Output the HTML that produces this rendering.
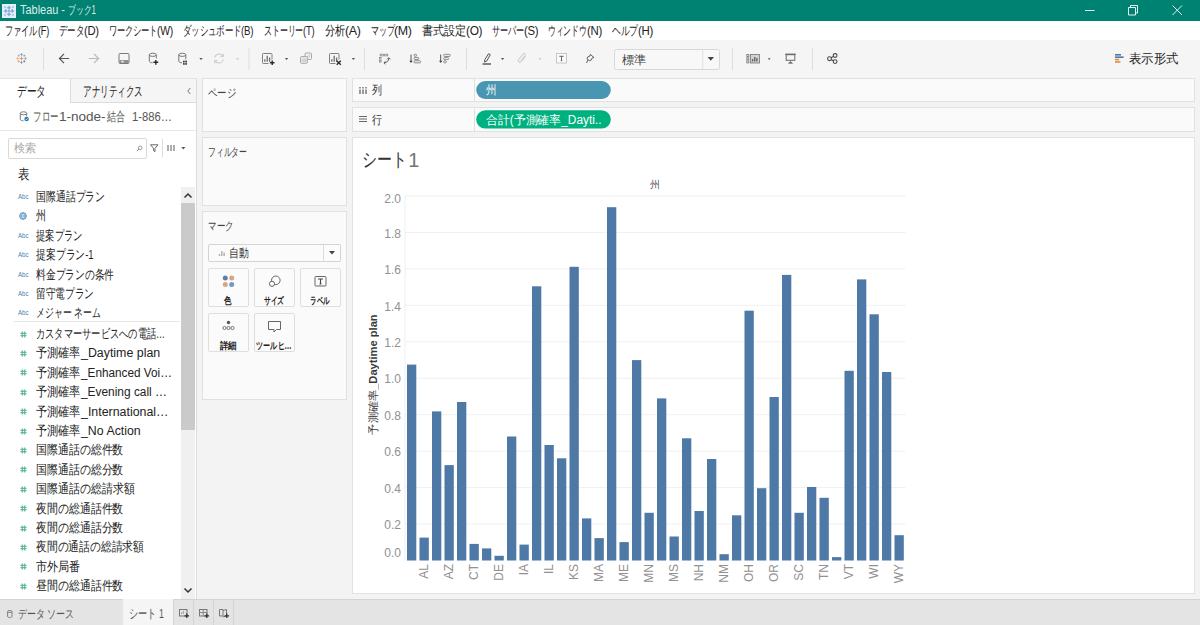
<!DOCTYPE html>
<html lang="ja">
<head>
<meta charset="utf-8">
<title>Tableau - ブック1</title>
<style>
html,body{margin:0;padding:0}
body{width:1200px;height:625px;overflow:hidden;position:relative;background:#f3f3f3;font-family:"Liberation Sans",sans-serif;font-size:12px;color:#333}
.abs{position:absolute}
.t{position:absolute;white-space:nowrap;font-family:"Liberation Sans",sans-serif}
svg{display:block;overflow:visible}
.titlebar{position:absolute;left:0;top:0;width:1200px;height:21px;background:#008272}
.menubar{position:absolute;left:0;top:21px;width:1200px;height:19px;background:#fff}
.menubar .t{top:2px;font-size:12px;line-height:16px;color:#222;letter-spacing:-0.3px}
.toolbar{position:absolute;left:0;top:40px;width:1200px;height:38px;background:#f5f5f5}
.sep{position:absolute;top:8px;width:1px;height:22px;background:#dedede}
.card{position:absolute;background:#fafafa;border:1px solid #e1e1e1;box-sizing:border-box}
.view{position:absolute;left:352px;top:137px;width:842.7px;height:456.5px;background:#fff;border:1px solid #e2e2e2;box-sizing:border-box}
.ax{font-size:12px;line-height:16px;color:#919191}
.ytitle{left:272.5px;top:367.2px;width:200px;height:14px;text-align:center;transform:rotate(-90deg);font-size:11px;font-weight:bold;color:#3a3a3a;line-height:14px}
.xl{top:557px;height:14px;line-height:14px;transform-origin:100% 50%;transform:rotate(-90deg);font-size:12px;color:#919191}
.pane{position:absolute;left:0;top:78px;width:197px;height:521px;background:#fff;border-right:1px solid #dcdcdc;box-sizing:border-box}
.fld{left:36px;font-size:12.500px;line-height:18px;color:#222}
.mb{position:absolute;width:41px;height:39.500px;box-sizing:border-box;border:1px solid #dedede;border-radius:2px;background:#fbfbfb}
.ml{width:101px;text-align:center;font-size:10px;line-height:13px;color:#222;font-weight:bold}
.pill{position:absolute;box-sizing:border-box;width:135px;height:18px;border-radius:9px;color:#fff;font-size:12px;line-height:18px;padding-left:10px;white-space:nowrap;overflow:hidden;font-family:"Liberation Sans",sans-serif}
.sg{position:absolute;top:0;white-space:nowrap;display:block}

</style>
</head>
<body>
<div class="titlebar">
<svg class="abs" style="left:2px;top:3.500px" width="14" height="14" viewBox="0 0 15 15">
<rect x="0" y="0" width="15" height="15" fill="#e6eff8"/>
<g fill="#6c9fd6" opacity=".85">
<rect x="6.8" y="2" width="1.4" height="4"/><rect x="5.5" y="3.3" width="4" height="1.4"/>
<rect x="6.8" y="9" width="1.4" height="4"/><rect x="5.5" y="10.3" width="4" height="1.4"/>
<rect x="2" y="6.8" width="4" height="1.4"/><rect x="3.3" y="5.5" width="1.4" height="4"/>
<rect x="9" y="6.8" width="4" height="1.4"/><rect x="10.3" y="5.5" width="1.4" height="4"/>
<rect x="6.3" y="6.8" width="2.4" height="1.4"/><rect x="6.8" y="6.3" width="1.4" height="2.4"/>
<rect x="2.5" y="2.5" width="1.5" height="1.5"/><rect x="11" y="2.5" width="1.5" height="1.5"/>
<rect x="2.5" y="11" width="1.5" height="1.5"/><rect x="11" y="11" width="1.5" height="1.5"/>
</g>
</svg>
<div class="t" style="left:0;top:2px;font-size:12px;line-height:17px;color:rgba(255,255,255,.88);"><span class="sg" style="transform-origin:0 50%;transform:scaleX(0.9114);width:49.40px;text-align-last:justify;left:20px">Tableau -</span><span class="sg" style="left:65px"> </span><span class="sg" style="transform-origin:0 50%;transform:scaleX(0.6559);width:42.71px;text-align-last:justify;left:68px">ブック1</span></div>
<svg class="abs" style="left:1080px;top:0" width="120" height="21" viewBox="1080 0 120 21">
<g stroke="#fff" stroke-opacity=".9" stroke-width="1" fill="none">
<path d="M1085 10.5H1094.5"/>
<path d="M1128.5 7.5h7v7.5h-7z"/><path d="M1130.5 7.5v-2h7v7.5h-2"/>
<path d="M1172.5 5.5l9.5 9.5M1182 5.5l-9.5 9.5"/>
</g>
</svg>
</div>

<div class="menubar">
<div class="t" style="left:0"><span class="sg" style="transform-origin:0 50%;transform:scaleX(0.6396);width:50.83px;text-align-last:justify;font-size:13px;left:5.0px">ファイル</span><span class="sg" style="transform-origin:0 50%;transform:scaleX(0.7619);width:14.46px;text-align-last:justify;left:37.5px">(F)</span></div>
<div class="t" style="left:0"><span class="sg" style="transform-origin:0 50%;transform:scaleX(0.6508);width:38.13px;text-align-last:justify;font-size:13px;left:59.0px">データ</span><span class="sg" style="transform-origin:0 50%;transform:scaleX(0.9388);width:15.79px;text-align-last:justify;left:83.8px">(D)</span></div>
<div class="t" style="left:0"><span class="sg" style="transform-origin:0 50%;transform:scaleX(0.6365);width:76.22px;text-align-last:justify;font-size:13px;left:108.5px">ワークシート</span><span class="sg" style="transform-origin:0 50%;transform:scaleX(0.8685);width:18.44px;text-align-last:justify;left:157.0px">(W)</span></div>
<div class="t" style="left:0"><span class="sg" style="transform-origin:0 50%;transform:scaleX(0.6546);width:88.93px;text-align-last:justify;font-size:13px;left:183.0px">ダッシュボード</span><span class="sg" style="transform-origin:0 50%;transform:scaleX(0.8074);width:15.13px;text-align-last:justify;left:241.2px">(B)</span></div>
<div class="t" style="left:0"><span class="sg" style="transform-origin:0 50%;transform:scaleX(0.6172);width:63.54px;text-align-last:justify;font-size:13px;left:263.5px">ストーリー</span><span class="sg" style="transform-origin:0 50%;transform:scaleX(0.7827);width:14.46px;text-align-last:justify;left:302.7px">(T)</span></div>
<div class="t" style="left:0"><span class="sg" style="transform-origin:0 50%;transform:scaleX(0.7872);width:25.43px;text-align-last:justify;font-size:13px;left:325.0px">分析</span><span class="sg" style="transform-origin:0 50%;transform:scaleX(1.0391);width:15.13px;text-align-last:justify;left:345.0px">(A)</span></div>
<div class="t" style="left:0"><span class="sg" style="transform-origin:0 50%;transform:scaleX(0.6193);width:38.13px;text-align-last:justify;font-size:13px;left:370.7px">マップ</span><span class="sg" style="transform-origin:0 50%;transform:scaleX(1.0355);width:17.11px;text-align-last:justify;left:394.3px">(M)</span></div>
<div class="t" style="left:0"><span class="sg" style="transform-origin:0 50%;transform:scaleX(0.8541);width:50.83px;text-align-last:justify;font-size:13px;left:422.3px">書式設定</span><span class="sg" style="transform-origin:0 50%;transform:scaleX(0.9916);width:16.46px;text-align-last:justify;left:465.7px">(O)</span></div>
<div class="t" style="left:0"><span class="sg" style="transform-origin:0 50%;transform:scaleX(0.6239);width:50.83px;text-align-last:justify;font-size:13px;left:492.3px">サーバー</span><span class="sg" style="transform-origin:0 50%;transform:scaleX(0.9464);width:15.13px;text-align-last:justify;left:524.0px">(S)</span></div>
<div class="t" style="left:0"><span class="sg" style="transform-origin:0 50%;transform:scaleX(0.6046);width:63.54px;text-align-last:justify;font-size:13px;left:548.3px">ウィンドウ</span><span class="sg" style="transform-origin:0 50%;transform:scaleX(0.9514);width:15.79px;text-align-last:justify;left:586.7px">(N)</span></div>
<div class="t" style="left:0"><span class="sg" style="transform-origin:0 50%;transform:scaleX(0.6822);width:38.13px;text-align-last:justify;font-size:13px;left:612.3px">ヘルプ</span><span class="sg" style="transform-origin:0 50%;transform:scaleX(0.9514);width:15.79px;text-align-last:justify;left:638.3px">(H)</span></div>
</div>
<div class="toolbar">
<svg class="abs" style="left:0;top:0" width="1200" height="38" viewBox="0 40 1200 38">
<!-- separators -->
<g fill="#dddddd">
<rect x="43" y="48" width="1" height="22"/><rect x="248.5" y="48" width="1" height="22"/><rect x="364" y="48" width="1" height="22"/>
<rect x="466" y="48" width="1" height="22"/><rect x="732" y="48" width="1" height="22"/><rect x="812" y="48" width="1" height="22"/>
</g>
<!-- tableau logo -->
<g stroke-width="1" fill="none">
<path d="M21.500 56.500v4M19.500 58.500h4" stroke="#ec9a5c"/>
<path d="M21.500 53.300v2.400M20.300 54.500h2.400" stroke="#8d93b3"/>
<path d="M21.500 61.300v2.400M20.300 62.500h2.400" stroke="#8d93b3"/>
<path d="M17.500 57.300v2.400M16.300 58.500h2.400" stroke="#f0b27a"/>
<path d="M25.500 57.300v2.400M24.300 58.500h2.400" stroke="#8aa9b8"/>
<path d="M18.700 54.700v2M17.700 55.700h2" stroke="#9bb6c1"/>
<path d="M24.300 54.700v2M23.300 55.700h2" stroke="#84a3c6"/>
<path d="M18.700 60.300v2M17.700 61.300h2" stroke="#d99a7a"/>
<path d="M24.300 60.300v2M23.300 61.300h2" stroke="#6c84a8"/>
</g>
<!-- back / forward -->
<path d="M64 53.900L59.400 58.500L64 63.100M59.800 58.500H69.200" stroke="#555" stroke-width="1.200" fill="none"/>
<path d="M94 53.900L98.600 58.500L94 63.100M98.200 58.500H88.800" stroke="#b8b8b8" stroke-width="1.200" fill="none"/>
<!-- save -->
<g stroke="#7a7a7a" stroke-width="1" fill="none">
<rect x="119" y="53.500" width="10" height="10" rx="1"/>
<rect x="119.500" y="60" width="9" height="3" fill="#909090" stroke="none"/>
<rect x="121.300" y="60.800" width="2.400" height="1.600" fill="#f5f5f5" stroke="none"/>
</g>
<!-- new data source -->
<g stroke="#777" stroke-width="1" fill="none">
<ellipse cx="152.800" cy="54.800" rx="3.500" ry="1.600"/>
<path d="M149.300 54.800v6.400c0 .9 1.500 1.600 3.300 1.600M156.300 54.800v3.700"/>
<path d="M155.800 59.900v4.800M153.400 62.300h4.800" stroke="#2b2b2b" stroke-width="1.400"/>
</g>
<!-- pause auto updates -->
<g stroke="#777" stroke-width="1" fill="none">
<ellipse cx="182.300" cy="54.800" rx="3.500" ry="1.600"/>
<path d="M178.800 54.800v6.400c0 .9 1.500 1.600 3.300 1.600M185.800 54.800v4.500"/>
<rect x="183" y="60.700" width="4" height="4" fill="#3a3a3a" stroke="none"/>
<path d="M185 60.700v4M183 62.700h4" stroke="#f5f5f5" stroke-width="0.600"/>
</g>
<path d="M199.300 58.100h3.400l-1.700 2z" fill="#555"/>
<!-- refresh (disabled) -->
<g stroke="#cbcbcb" stroke-width="1.100" fill="none">
<path d="M214.800 57.500a4.400 4.400 0 0 1 8-1.500"/><path d="M223.200 59.500a4.400 4.400 0 0 1 -8 1.500"/>
<path d="M223.300 53.800v2.600h-2.600" /><path d="M214.700 63.200v-2.600h2.600"/>
</g>
<path d="M236.2 58.200h2.800l-1.400 1.700z" fill="#c2c2c2"/>
<!-- new worksheet -->
<g stroke="#808080" stroke-width="1" fill="none">
<path d="M272 59.500V54.300a.8 .8 0 0 0 -.8 -.8H263.300a.8 .8 0 0 0 -.8 .8V62.700a.8 .8 0 0 0 .8 .8H268.500"/>
<path d="M264.800 61.700v-2.400M267.200 61.700v-6M269.600 61.700v-4.200" stroke="#6e6e6e" stroke-width="1.300"/>
<path d="M272.200 60.500v4.600M269.900 62.800h4.600" stroke="#2b2b2b" stroke-width="1.400"/>
</g>
<path d="M284.900 58.100h3.400l-1.700 2z" fill="#555"/>
<!-- duplicate (disabled) -->
<g stroke="#ababab" stroke-width="1" fill="#f1f1f1">
<rect x="305" y="53" width="6.500" height="6.500" rx="1"/>
<path d="M307.300 57.500v-1.500M309.200 57.500v-3" stroke="#bdbdbd"/>
<rect x="300.500" y="56.500" width="6.800" height="6.800" rx="1" fill="#e6e6e6"/>
<path d="M302.500 61.500v-1.500M304 61.500v-3M305.500 61.500v-2" stroke="#bdbdbd" stroke-width=".9"/>
</g>
<!-- clear sheet -->
<g stroke="#808080" stroke-width="1" fill="none">
<path d="M339 59.500V54.300a.8 .8 0 0 0 -.8 -.8H330.300a.8 .8 0 0 0 -.8 .8V62.700a.8 .8 0 0 0 .8 .8H335.500"/>
<path d="M331.800 61.700v-2.400M334.200 61.700v-6M336.600 61.700v-4.200" stroke="#6e6e6e" stroke-width="1.300"/>
<path d="M336.700 60.700l4.100 4.100M340.800 60.700l-4.100 4.100" stroke="#2b2b2b" stroke-width="1.400"/>
</g>
<path d="M351.700 58.100h3.400l-1.700 2z" fill="#555"/>
<!-- swap -->
<g stroke="#8a8a8a" stroke-width=".8" fill="none">
<rect x="380.200" y="54.200" width="1.700" height="1.700"/><rect x="383.100" y="54.200" width="1.700" height="1.700"/><rect x="386" y="54.200" width="1.700" height="1.700"/>
<rect x="379.400" y="57.400" width="1.700" height="1.700"/><rect x="379.400" y="60.400" width="1.700" height="1.700"/>
<path d="M388.800 58.200c0 2.800 -1.900 4.400 -4.600 4.600" stroke="#5e5e5e" stroke-width="1"/>
<path d="M387.200 59.300l1.600 -1.600l1.600 1.600" stroke="#5e5e5e" stroke-width="1"/>
<path d="M385.500 61.400l-1.600 1.400l1.600 1.400" stroke="#5e5e5e" stroke-width="1"/>
</g>
<!-- sort asc -->
<g stroke="#858585" stroke-width=".9" fill="#ececec">
<path d="M411 54.500v7" stroke="#555" stroke-width="1" fill="none"/>
<path d="M409.300 60.700h3.400l-1.700 2.300z" fill="#444" stroke="none"/>
<rect x="414" y="54.300" width="2.600" height="2" rx=".8"/>
<rect x="414" y="57.500" width="4.800" height="2" rx=".8"/>
<rect x="414" y="60.700" width="6.600" height="2.200" rx=".9"/>
</g>
<!-- sort desc -->
<g stroke="#858585" stroke-width=".9" fill="#ececec">
<path d="M440.700 54.500v7" stroke="#555" stroke-width="1" fill="none"/>
<path d="M439 60.700h3.400l-1.700 2.300z" fill="#444" stroke="none"/>
<rect x="443.700" y="54.300" width="6.600" height="2.200" rx=".9"/>
<rect x="443.700" y="57.600" width="4.800" height="2" rx=".8"/>
<rect x="443.700" y="60.800" width="2.600" height="2" rx=".8"/>
</g>
<!-- highlight pen -->
<g stroke="#555" stroke-width="1" fill="none">
<path d="M488.500 53.700l1.800 .9l-3.600 6.600l-2.300 .8l.5 -2.400z"/>
<path d="M482.500 64h8.500" stroke="#444" stroke-width="1.300"/>
</g>
<path d="M500.9 58.100h3.400l-1.700 2z" fill="#555"/>
<!-- paperclip (disabled) -->
<g stroke="#c6c6c6" stroke-width="1" fill="none">
<path d="M525.500 56.500l-4.200 5.300a1.700 1.700 0 0 1 -2.700 -2.100l4.600 -5.800a1.200 1.200 0 0 1 1.900 1.500l-4.200 5.300"/>
</g>
<path d="M538.6 58.200h2.800l-1.400 1.700z" fill="#c2c2c2"/>
<!-- T box -->
<rect x="556.500" y="53.500" width="10" height="9.500" fill="#fbfbfb" stroke="#c6c6c6" stroke-width="1"/>
<path d="M559.300 56.300h4.400M561.500 56.300v4.400M560.700 60.700h1.600" stroke="#666" stroke-width="1" fill="none"/>
<!-- pin -->
<g stroke="#5a5a5a" stroke-width="1" fill="none" stroke-linejoin="round">
<path d="M590.300 54.300l3.700 3.300l-1.700 .3l-1.400 2.400l-1.600 .4l-2.300 -2l.5 -1.600l2.500 -1.200z"/>
<path d="M588 59.700l-1.500 3.300"/>
</g>
<!-- fit select -->
<rect x="614.500" y="49.500" width="105" height="20" rx="2" fill="#f8f8f8" stroke="#d8d8d8"/>
<path d="M702.800 50v19" stroke="#e0e0e0"/>
<path d="M707.600 57h6.400l-3.200 3.800z" fill="#444"/>
<!-- show/hide cards -->
<g stroke="#808080" stroke-width=".9" fill="none">
<rect x="750.500" y="54.500" width="9" height="8.500" fill="#d2d2d2"/>
<path d="M752.600 61.500v-2.500M754.700 61.500v-4.500M756.900 61.500v-3.500" stroke="#666" stroke-width="1.400"/>
<rect x="746.800" y="54.500" width="2" height="2"/><rect x="746.800" y="57.700" width="2" height="2"/><rect x="746.800" y="60.900" width="2" height="2"/>
</g>
<path d="M767.8 58.200h2.800l-1.400 1.700z" fill="#555"/>
<!-- presentation -->
<g stroke="#686868" stroke-width="1" fill="none">
<path d="M785.200 54.200h10.600" stroke="#555" stroke-width="1.100"/>
<rect x="786.200" y="54.700" width="8.600" height="5.600"/>
<path d="M790.500 60.300v1.600M788.500 63.300l2 -1.600l2 1.600z" fill="#777" stroke-width=".7"/>
</g>
<!-- share -->
<g stroke="#4a4a4a" stroke-width="1.100" fill="#f5f5f5">
<path d="M829.500 58.700l5.500 -3.200M829.500 58.700l5.500 2.900" fill="none"/>
<circle cx="829.500" cy="58.700" r="1.900"/><circle cx="835.100" cy="55.500" r="1.900"/><circle cx="835.100" cy="61.600" r="1.900"/>
</g>
<!-- show me -->
<g>
<rect x="1115" y="54" width="6" height="1.600" fill="#4e79a7"/>
<rect x="1115" y="56.400" width="8.600" height="1.600" fill="#4e79a7"/>
<rect x="1115" y="58.800" width="4.200" height="1.600" fill="#e08a4f"/>
<rect x="1115" y="61.200" width="5.400" height="1.600" fill="#e08a4f"/>
</g>
</svg>
<div class="t" style="transform-origin:0 50%;transform:scaleX(1.0167);width:24.02px;text-align-last:justify;left:621.5px;top:11px;font-size:12px;line-height:18px;color:#444">標準</div>
<div class="t" style="transform-origin:0 50%;transform:scaleX(0.9481);width:52.02px;text-align-last:justify;left:1128.5px;top:10px;font-size:12.500px;line-height:18px;color:#222">表示形式</div>
</div>

<div class="pane"></div>
<div class="abs" style="left:70px;top:78px;width:126px;height:24.500px;background:#f5f5f5;border-left:1px solid #dcdcdc;border-bottom:1px solid #dcdcdc;box-sizing:border-box"></div>
<div class="abs" style="left:0;top:78px;width:197px;height:1px;background:#e4e4e4"></div>
<div class="t" style="transform-origin:0 50%;transform:scaleX(0.6905);width:42.02px;text-align-last:justify;left:16.700px;top:82px;font-size:14px;line-height:18px;color:#222">データ</div>
<div class="t" style="transform-origin:0 50%;transform:scaleX(0.6122);width:98.02px;text-align-last:justify;left:82.500px;top:82px;font-size:14px;line-height:18px;color:#222">アナリティクス</div>
<svg class="abs" style="left:185px;top:85.500px" width="8" height="10" viewBox="0 0 8 10"><path d="M5.300 2L2.800 5l2.500 3" stroke="#777" stroke-width="1" fill="none"/></svg>
<svg class="abs" style="left:19px;top:111px" width="11" height="11" viewBox="0 0 11 11"><g stroke="#777" fill="none" stroke-width="1"><ellipse cx="4.500" cy="2.300" rx="3.200" ry="1.500"/><path d="M1.300 2.300v6c0 .9 1.400 1.500 3.200 1.500M7.700 2.300v3"/></g><circle cx="7.600" cy="8" r="2.300" fill="#2a7fb5"/><path d="M6.600 8l.8 .8l1.300 -1.500" stroke="#fff" stroke-width=".7" fill="none"/></svg>
<div class="t" style="left:0;top:108px;font-size:13px;line-height:18px;color:#555"><span class="sg" style="transform-origin:0 50%;transform:scaleX(0.6538);width:39.02px;text-align-last:justify;left:33.300px">フロー</span><span class="sg" style="transform-origin:0 50%;transform:scaleX(1.0399);width:44.83px;text-align-last:justify;left:59.200px">1-node-</span><span class="sg" style="transform-origin:0 50%;transform:scaleX(0.6923);width:26.02px;text-align-last:justify;left:106.500px">結合</span><span class="sg" style="left:125.500px"> </span><span class="sg" style="transform-origin:0 50%;transform:scaleX(0.8649);width:46.27px;text-align-last:justify;left:131.700px">1-886…</span></div>
<div class="abs" style="left:0;top:129.500px;width:196px;height:1px;background:#e8e8e8"></div>
<div class="abs" style="left:7.500px;top:137.500px;width:139px;height:21px;box-sizing:border-box;border:1px solid #d9d9d9;border-radius:2px;background:#fff"></div>
<div class="t" style="transform-origin:0 50%;transform:scaleX(0.9167);width:24.02px;text-align-last:justify;left:13.800px;top:139.500px;font-size:12px;line-height:17px;color:#aaa">検索</div>
<svg class="abs" style="left:135.500px;top:144.500px" width="7" height="7" viewBox="0 0 10 10"><circle cx="6" cy="4" r="2.600" stroke="#777" fill="none" stroke-width="1"/><path d="M4.200 5.800L1.500 8.500" stroke="#666" stroke-width="1.200"/></svg>
<svg class="abs" style="left:149px;top:142px" width="40" height="12" viewBox="149 142 40 12"><path d="M150.500 144.800h7.500l-3 3.500v3.300l-1.500 -1v-2.300z" stroke="#666" fill="none" stroke-width="1"/><rect x="162" y="139" width="1" height="18" fill="#dcdcdc"/><path d="M168 145v6M171 145v6M174 145v6" stroke="#808080" stroke-width="1.300"/><path d="M181.300 147h4l-2 2.400z" fill="#555"/></svg>
<div class="t" style="transform-origin:0 50%;transform:scaleX(0.8214);width:14.02px;text-align-last:justify;left:17.500px;top:165.500px;font-size:13.500px;line-height:18px;color:#222">表</div>
<div class="t" style="transform-origin:0 50%;transform:scaleX(0.8705);width:12.08px;text-align-last:justify;left:17.800px;top:192.0px;font-size:7px;line-height:10px;color:#4a7fae">Abc</div>
<div class="t fld" style="transform-origin:0 50%;transform:scaleX(0.7604);width:91.02px;text-align-last:justify;top:188.0px">国際通話プラン</div>
<svg class="abs" style="left:19px;top:212.4px" width="8" height="8" viewBox="0 0 8 8"><circle cx="4" cy="4" r="3.300" fill="#dbe9f4" stroke="#4e8fc0" stroke-width="1"/><path d="M.7 4h6.600M4 .7c-2 2 -2 4.600 0 6.600M4 .7c2 2 2 4.600 0 6.600" stroke="#4e8fc0" stroke-width=".6" fill="none"/></svg>
<div class="t fld" style="transform-origin:0 50%;transform:scaleX(0.7692);width:13.02px;text-align-last:justify;top:207.4px">州</div>
<div class="t" style="transform-origin:0 50%;transform:scaleX(0.8705);width:12.08px;text-align-last:justify;left:17.800px;top:230.8px;font-size:7px;line-height:10px;color:#4a7fae">Abc</div>
<div class="t fld" style="transform-origin:0 50%;transform:scaleX(0.7200);width:65.02px;text-align-last:justify;top:226.8px">提案プラン</div>
<div class="t" style="transform-origin:0 50%;transform:scaleX(0.8705);width:12.08px;text-align-last:justify;left:17.800px;top:250.2px;font-size:7px;line-height:10px;color:#4a7fae">Abc</div>
<div class="t fld" style="transform-origin:0 50%;transform:scaleX(0.7567);width:76.14px;text-align-last:justify;top:246.2px">提案プラン-1</div>
<div class="t" style="transform-origin:0 50%;transform:scaleX(0.8705);width:12.08px;text-align-last:justify;left:17.800px;top:269.6px;font-size:7px;line-height:10px;color:#4a7fae">Abc</div>
<div class="t fld" style="transform-origin:0 50%;transform:scaleX(0.7500);width:104.02px;text-align-last:justify;top:265.6px">料金プランの条件</div>
<div class="t" style="transform-origin:0 50%;transform:scaleX(0.8705);width:12.08px;text-align-last:justify;left:17.800px;top:289.0px;font-size:7px;line-height:10px;color:#4a7fae">Abc</div>
<div class="t fld" style="transform-origin:0 50%;transform:scaleX(0.7449);width:78.02px;text-align-last:justify;top:285.0px">留守電プラン</div>
<div class="t" style="transform-origin:0 50%;transform:scaleX(0.8705);width:12.08px;text-align-last:justify;left:17.800px;top:308.4px;font-size:7px;line-height:10px;color:#4a7fae">Abc</div>
<div class="t fld" style="transform-origin:0 50%;transform:scaleX(0.6816);width:94.50px;text-align-last:justify;top:304.4px">メジャー ネーム</div>
<div class="abs" style="left:14px;top:321.300px;width:166px;height:1px;background:#e6e6e6"></div>
<svg class="abs" style="left:20px;top:330.5px" width="7" height="7" viewBox="0 0 7 7"><path d="M2.300 .5v6M4.700 .5v6M.5 2.300h6M.5 4.700h6" stroke="#62b893" stroke-width="1.200" fill="none"/></svg>
<div class="t fld" style="transform-origin:0 50%;transform:scaleX(0.7107);width:181.52px;text-align-last:justify;top:325.0px">カスタマーサービスへの電話…</div>
<svg class="abs" style="left:20px;top:349.9px" width="7" height="7" viewBox="0 0 7 7"><path d="M2.300 .5v6M4.700 .5v6M.5 2.300h6M.5 4.700h6" stroke="#62b893" stroke-width="1.200" fill="none"/></svg>
<div class="t fld" style="left:0;top:344.4px"><span class="sg" style="transform-origin:0 50%;transform:scaleX(0.8577);width:52.02px;text-align-last:justify;left:36px">予測確率</span><span class="sg" style="transform-origin:0 50%;transform:scaleX(0.9912);width:79.93px;text-align-last:justify;left:80.800px">_Daytime plan</span></div>
<svg class="abs" style="left:20px;top:369.3px" width="7" height="7" viewBox="0 0 7 7"><path d="M2.300 .5v6M4.700 .5v6M.5 2.300h6M.5 4.700h6" stroke="#62b893" stroke-width="1.200" fill="none"/></svg>
<div class="t fld" style="left:0;top:363.8px"><span class="sg" style="transform-origin:0 50%;transform:scaleX(0.8577);width:52.02px;text-align-last:justify;left:36px">予測確率</span><span class="sg" style="transform-origin:0 50%;transform:scaleX(0.9409);width:96.63px;text-align-last:justify;left:80.800px">_Enhanced Voi…</span></div>
<svg class="abs" style="left:20px;top:388.7px" width="7" height="7" viewBox="0 0 7 7"><path d="M2.300 .5v6M4.700 .5v6M.5 2.300h6M.5 4.700h6" stroke="#62b893" stroke-width="1.200" fill="none"/></svg>
<div class="t fld" style="left:0;top:383.2px"><span class="sg" style="transform-origin:0 50%;transform:scaleX(0.8577);width:52.02px;text-align-last:justify;left:36px">予測確率</span><span class="sg" style="transform-origin:0 50%;transform:scaleX(0.9510);width:90.35px;text-align-last:justify;left:80.800px">_Evening call …</span></div>
<svg class="abs" style="left:20px;top:408.1px" width="7" height="7" viewBox="0 0 7 7"><path d="M2.300 .5v6M4.700 .5v6M.5 2.300h6M.5 4.700h6" stroke="#62b893" stroke-width="1.200" fill="none"/></svg>
<div class="t fld" style="left:0;top:402.6px"><span class="sg" style="transform-origin:0 50%;transform:scaleX(0.8577);width:52.02px;text-align-last:justify;left:36px">予測確率</span><span class="sg" style="transform-origin:0 50%;transform:scaleX(0.9913);width:88.29px;text-align-last:justify;left:80.800px">_International…</span></div>
<svg class="abs" style="left:20px;top:427.5px" width="7" height="7" viewBox="0 0 7 7"><path d="M2.300 .5v6M4.700 .5v6M.5 2.300h6M.5 4.700h6" stroke="#62b893" stroke-width="1.200" fill="none"/></svg>
<div class="t fld" style="left:0;top:422.0px"><span class="sg" style="transform-origin:0 50%;transform:scaleX(0.8577);width:52.02px;text-align-last:justify;left:36px">予測確率</span><span class="sg" style="transform-origin:0 50%;transform:scaleX(0.9873);width:60.49px;text-align-last:justify;left:80.800px">_No Action</span></div>
<svg class="abs" style="left:20px;top:446.9px" width="7" height="7" viewBox="0 0 7 7"><path d="M2.300 .5v6M4.700 .5v6M.5 2.300h6M.5 4.700h6" stroke="#62b893" stroke-width="1.200" fill="none"/></svg>
<div class="t fld" style="transform-origin:0 50%;transform:scaleX(0.8404);width:104.02px;text-align-last:justify;top:441.4px">国際通話の総件数</div>
<svg class="abs" style="left:20px;top:466.3px" width="7" height="7" viewBox="0 0 7 7"><path d="M2.300 .5v6M4.700 .5v6M.5 2.300h6M.5 4.700h6" stroke="#62b893" stroke-width="1.200" fill="none"/></svg>
<div class="t fld" style="transform-origin:0 50%;transform:scaleX(0.8404);width:104.02px;text-align-last:justify;top:460.8px">国際通話の総分数</div>
<svg class="abs" style="left:20px;top:485.7px" width="7" height="7" viewBox="0 0 7 7"><path d="M2.300 .5v6M4.700 .5v6M.5 2.300h6M.5 4.700h6" stroke="#62b893" stroke-width="1.200" fill="none"/></svg>
<div class="t fld" style="transform-origin:0 50%;transform:scaleX(0.8427);width:117.02px;text-align-last:justify;top:480.2px">国際通話の総請求額</div>
<svg class="abs" style="left:20px;top:505.1px" width="7" height="7" viewBox="0 0 7 7"><path d="M2.300 .5v6M4.700 .5v6M.5 2.300h6M.5 4.700h6" stroke="#62b893" stroke-width="1.200" fill="none"/></svg>
<div class="t fld" style="transform-origin:0 50%;transform:scaleX(0.8404);width:104.02px;text-align-last:justify;top:499.6px">夜間の総通話件数</div>
<svg class="abs" style="left:20px;top:524.5px" width="7" height="7" viewBox="0 0 7 7"><path d="M2.300 .5v6M4.700 .5v6M.5 2.300h6M.5 4.700h6" stroke="#62b893" stroke-width="1.200" fill="none"/></svg>
<div class="t fld" style="transform-origin:0 50%;transform:scaleX(0.8404);width:104.02px;text-align-last:justify;top:519.0px">夜間の総通話分数</div>
<svg class="abs" style="left:20px;top:543.9px" width="7" height="7" viewBox="0 0 7 7"><path d="M2.300 .5v6M4.700 .5v6M.5 2.300h6M.5 4.700h6" stroke="#62b893" stroke-width="1.200" fill="none"/></svg>
<div class="t fld" style="transform-origin:0 50%;transform:scaleX(0.8308);width:130.02px;text-align-last:justify;top:538.4px">夜間の通話の総請求額</div>
<svg class="abs" style="left:20px;top:563.3px" width="7" height="7" viewBox="0 0 7 7"><path d="M2.300 .5v6M4.700 .5v6M.5 2.300h6M.5 4.700h6" stroke="#62b893" stroke-width="1.200" fill="none"/></svg>
<div class="t fld" style="transform-origin:0 50%;transform:scaleX(0.8558);width:52.02px;text-align-last:justify;top:557.8px">市外局番</div>
<svg class="abs" style="left:20px;top:582.7px" width="7" height="7" viewBox="0 0 7 7"><path d="M2.300 .5v6M4.700 .5v6M.5 2.300h6M.5 4.700h6" stroke="#62b893" stroke-width="1.200" fill="none"/></svg>
<div class="t fld" style="transform-origin:0 50%;transform:scaleX(0.8404);width:104.02px;text-align-last:justify;top:577.2px">昼間の総通話件数</div>
<div class="abs" style="left:180.500px;top:186.500px;width:14.500px;height:412.500px;background:#f0f0f0"></div>
<div class="abs" style="left:180.500px;top:203px;width:14.500px;height:227px;background:#cacaca"></div>
<svg class="abs" style="left:179.800px;top:186.500px" width="16" height="412" viewBox="0 0 16 412"><path d="M4.500 10.500L8 7l3.500 3.500" stroke="#333" stroke-width="1.500" fill="none"/><path d="M4.500 401.500L8 405l3.500 -3.500" stroke="#333" stroke-width="1.500" fill="none"/></svg>
<div class="card" style="left:202px;top:78px;width:145px;height:53.500px"></div>
<div class="t" style="transform-origin:0 50%;transform:scaleX(0.7833);width:36.02px;text-align-last:justify;left:208px;top:85px;font-size:12px;line-height:16px;color:#444">ページ</div>
<div class="card" style="left:202px;top:137px;width:145px;height:68.500px"></div>
<div class="t" style="transform-origin:0 50%;transform:scaleX(0.6500);width:60.02px;text-align-last:justify;left:208px;top:144px;font-size:12px;line-height:16px;color:#444">フィルター</div>
<div class="card" style="left:202px;top:211px;width:145px;height:189px"></div>
<div class="t" style="transform-origin:0 50%;transform:scaleX(0.7111);width:36.02px;text-align-last:justify;left:208px;top:218px;font-size:12px;line-height:16px;color:#444">マーク</div>
<div class="abs" style="left:208px;top:244px;width:133px;height:18px;box-sizing:border-box;border:1px solid #d4d4d4;border-radius:2px;background:#fbfbfb"></div>
<div class="abs" style="left:323px;top:245px;width:1px;height:16.500px;background:#dcdcdc"></div>
<svg class="abs" style="left:218px;top:249px" width="8" height="8" viewBox="0 0 8 8"><path d="M1.500 7v-2M3.800 7v-5M6.100 7v-3.500" stroke="#aaa" stroke-width="1.300"/></svg>
<div class="t" style="transform-origin:0 50%;transform:scaleX(0.8250);width:24.02px;text-align-last:justify;left:229px;top:245px;font-size:11.500px;line-height:16px;color:#333">自動</div>
<svg class="abs" style="left:328px;top:250px" width="8" height="6" viewBox="0 0 8 6"><path d="M1 1h6l-3 3.600z" fill="#444"/></svg>
<!-- mark buttons -->
<div class="mb" style="left:208px;top:267.500px"></div>
<div class="mb" style="left:254px;top:267.500px"></div>
<div class="mb" style="left:300px;top:267.500px"></div>
<div class="mb" style="left:208px;top:312.500px"></div>
<div class="mb" style="left:254px;top:312.500px"></div>
<svg class="abs" style="left:202px;top:211px" width="145" height="189" viewBox="202 211 145 189">
<circle cx="225.300" cy="278" r="2.500" fill="#5b7fa8"/><circle cx="231.700" cy="278" r="2.500" fill="#dfa27c"/>
<circle cx="225.300" cy="284.400" r="2.500" fill="#d9a583"/><circle cx="231.700" cy="284.400" r="2.500" fill="#6f9ac4"/>
<g stroke="#666" stroke-width="1" fill="none">
<circle cx="275.800" cy="280.300" r="4.300"/><circle cx="272" cy="283.800" r="2.600" fill="#fafafa"/>
<rect x="315" y="276.500" width="11" height="9.500" rx=".8"/>
</g>
<path d="M318 279h5M320.500 279v5M319.500 284h2" stroke="#444" stroke-width="1.100" fill="none"/>
<circle cx="228.500" cy="322.500" r="1.700" fill="#555"/>
<g stroke="#666" stroke-width=".9" fill="none"><circle cx="224.500" cy="328" r="1.600"/><circle cx="228.500" cy="328" r="1.600"/><circle cx="232.500" cy="328" r="1.600"/></g>
<path d="M268.500 321.500h12v8h-4l-2.500 2.500v-2.500h-5.500z" stroke="#666" stroke-width="1" fill="none"/>
</svg>
<div class="t ml" style="left:178px;top:294px"><span style="transform-origin:50% 50%;transform:scaleX(0.7500);width:10.02px;text-align-last:justify;display:inline-block">色</span></div>
<div class="t ml" style="left:224px;top:294px"><span style="transform-origin:50% 50%;transform:scaleX(0.6733);width:30.02px;text-align-last:justify;display:inline-block">サイズ</span></div>
<div class="t ml" style="left:270px;top:294px"><span style="transform-origin:50% 50%;transform:scaleX(0.6533);width:30.02px;text-align-last:justify;display:inline-block">ラベル</span></div>
<div class="t ml" style="left:178px;top:339px"><span style="transform-origin:50% 50%;transform:scaleX(0.8500);width:20.02px;text-align-last:justify;display:inline-block">詳細</span></div>
<div class="t ml" style="left:224px;top:339px"><span style="transform-origin:50% 50%;transform:scaleX(0.7040);width:50.02px;text-align-last:justify;display:inline-block">ツールヒ…</span></div>

<div class="card" style="left:352px;top:78px;width:842.700px;height:24px"></div>
<div class="card" style="left:352px;top:107px;width:842.700px;height:25px"></div>
<div class="abs" style="left:473.500px;top:79px;width:1px;height:22px;background:#e0e0e0"></div>
<div class="abs" style="left:473.500px;top:108.500px;width:1px;height:22px;background:#e0e0e0"></div>
<svg class="abs" style="left:358px;top:86px" width="10" height="38" viewBox="358 86 10 38">
<path d="M360 87v7M363 87v7M366 87v7" stroke="#666" stroke-width="1.300" stroke-dasharray="1.500 1 6 0"/>
<path d="M359 116.500h8M359 119h8M359 121.500h8" stroke="#666" stroke-width="1.100"/>
</svg>
<div class="t" style="transform-origin:0 50%;transform:scaleX(0.8333);width:12.02px;text-align-last:justify;left:372px;top:82px;font-size:12px;line-height:16px;color:#333">列</div>
<div class="t" style="transform-origin:0 50%;transform:scaleX(0.8333);width:12.02px;text-align-last:justify;left:372px;top:111.500px;font-size:12px;line-height:16px;color:#333">行</div>
<svg class="abs" style="left:470px;top:78px" width="150" height="54" viewBox="470 78 150 54"><rect x="476.200" y="81" width="134.600" height="18" rx="9" fill="#4996b2"/><rect x="476.200" y="110.300" width="134.600" height="18.300" rx="9.150" fill="#00b180"/></svg>
<div class="t" style="left:485.800px;top:81px;font-size:12px;line-height:18px;color:#fff"><span style="transform-origin:0 50%;transform:scaleX(0.8750);width:12.02px;text-align-last:justify;display:inline-block">州</span></div>
<div class="t" style="left:485.800px;top:110.500px;font-size:12px;line-height:18px;color:#fff"><span style="transform-origin:0 50%;transform:scaleX(0.9898);width:116.71px;text-align-last:justify;display:inline-block">合計(予測確率_Dayti..</span></div>

<div class="view"></div>
<div class="t" style="transform-origin:0 50%;transform:scaleX(0.7895);width:57.02px;text-align-last:justify;left:361.5px;top:148px;font-size:19px;line-height:24px;color:#333;">シート</div>
<div class="t" style="left:408.3px;top:147.5px;font-size:20px;line-height:24px;color:#757575;">1</div>
<div class="t" style="left:640px;top:177.8px;width:30px;text-align:center;font-size:10px;line-height:14px;color:#555;">州</div>
<svg class="abs" style="left:352px;top:138px" width="844" height="456" viewBox="352 138 844 456"><rect x="405" y="195.50" width="500.5" height="1" fill="#f0f0f0"/><rect x="405" y="231.95" width="500.5" height="1" fill="#f0f0f0"/><rect x="405" y="268.40" width="500.5" height="1" fill="#f0f0f0"/><rect x="405" y="304.85" width="500.5" height="1" fill="#f0f0f0"/><rect x="405" y="341.30" width="500.5" height="1" fill="#f0f0f0"/><rect x="405" y="377.75" width="500.5" height="1" fill="#f0f0f0"/><rect x="405" y="414.20" width="500.5" height="1" fill="#f0f0f0"/><rect x="405" y="450.65" width="500.5" height="1" fill="#f0f0f0"/><rect x="405" y="487.10" width="500.5" height="1" fill="#f0f0f0"/><rect x="405" y="523.55" width="500.5" height="1" fill="#f0f0f0"/><rect x="404.5" y="196" width="1" height="365" fill="#efefef"/><rect x="407.00" y="364.60" width="9.30" height="195.90" fill="#4e79a7"/><rect x="419.50" y="537.60" width="9.30" height="22.90" fill="#4e79a7"/><rect x="432.00" y="411.40" width="9.30" height="149.10" fill="#4e79a7"/><rect x="444.50" y="465.10" width="9.30" height="95.40" fill="#4e79a7"/><rect x="457.00" y="402.00" width="9.30" height="158.50" fill="#4e79a7"/><rect x="469.50" y="543.90" width="9.30" height="16.60" fill="#4e79a7"/><rect x="482.00" y="548.40" width="9.30" height="12.10" fill="#4e79a7"/><rect x="494.50" y="555.80" width="9.30" height="4.70" fill="#4e79a7"/><rect x="507.00" y="436.50" width="9.30" height="124.00" fill="#4e79a7"/><rect x="519.50" y="544.60" width="9.30" height="15.90" fill="#4e79a7"/><rect x="532.00" y="286.30" width="9.30" height="274.20" fill="#4e79a7"/><rect x="544.50" y="445.00" width="9.30" height="115.50" fill="#4e79a7"/><rect x="557.00" y="458.30" width="9.30" height="102.20" fill="#4e79a7"/><rect x="569.50" y="266.80" width="9.30" height="293.70" fill="#4e79a7"/><rect x="582.00" y="518.40" width="9.30" height="42.10" fill="#4e79a7"/><rect x="594.50" y="538.10" width="9.30" height="22.40" fill="#4e79a7"/><rect x="607.00" y="207.20" width="9.30" height="353.30" fill="#4e79a7"/><rect x="619.50" y="542.10" width="9.30" height="18.40" fill="#4e79a7"/><rect x="632.00" y="360.10" width="9.30" height="200.40" fill="#4e79a7"/><rect x="644.50" y="512.80" width="9.30" height="47.70" fill="#4e79a7"/><rect x="657.00" y="398.40" width="9.30" height="162.10" fill="#4e79a7"/><rect x="669.50" y="536.50" width="9.30" height="24.00" fill="#4e79a7"/><rect x="682.00" y="438.30" width="9.30" height="122.20" fill="#4e79a7"/><rect x="694.50" y="511.00" width="9.30" height="49.50" fill="#4e79a7"/><rect x="707.00" y="459.00" width="9.30" height="101.50" fill="#4e79a7"/><rect x="719.50" y="554.20" width="9.30" height="6.30" fill="#4e79a7"/><rect x="732.00" y="515.30" width="9.30" height="45.20" fill="#4e79a7"/><rect x="744.50" y="310.70" width="9.30" height="249.80" fill="#4e79a7"/><rect x="757.00" y="488.20" width="9.30" height="72.30" fill="#4e79a7"/><rect x="769.50" y="397.00" width="9.30" height="163.50" fill="#4e79a7"/><rect x="782.00" y="274.90" width="9.30" height="285.60" fill="#4e79a7"/><rect x="794.50" y="512.80" width="9.30" height="47.70" fill="#4e79a7"/><rect x="807.00" y="487.00" width="9.30" height="73.50" fill="#4e79a7"/><rect x="819.50" y="497.80" width="9.30" height="62.70" fill="#4e79a7"/><rect x="832.00" y="557.10" width="9.30" height="3.40" fill="#4e79a7"/><rect x="844.50" y="370.80" width="9.30" height="189.70" fill="#4e79a7"/><rect x="857.00" y="279.40" width="9.30" height="281.10" fill="#4e79a7"/><rect x="869.50" y="314.30" width="9.30" height="246.20" fill="#4e79a7"/><rect x="882.00" y="372.00" width="9.30" height="188.50" fill="#4e79a7"/><rect x="894.50" y="535.20" width="9.30" height="25.30" fill="#4e79a7"/></svg>
<div class="t ax" style="left:370px;width:31px;top:190.8px;text-align:right;">2.0</div>
<div class="t ax" style="left:370px;width:31px;top:225.6px;text-align:right;">1.8</div>
<div class="t ax" style="left:370px;width:31px;top:262.1px;text-align:right;">1.6</div>
<div class="t ax" style="left:370px;width:31px;top:298.6px;text-align:right;">1.4</div>
<div class="t ax" style="left:370px;width:31px;top:335.0px;text-align:right;">1.2</div>
<div class="t ax" style="left:370px;width:31px;top:371.4px;text-align:right;">1.0</div>
<div class="t ax" style="left:370px;width:31px;top:407.9px;text-align:right;">0.8</div>
<div class="t ax" style="left:370px;width:31px;top:444.4px;text-align:right;">0.6</div>
<div class="t ax" style="left:370px;width:31px;top:480.8px;text-align:right;">0.4</div>
<div class="t ax" style="left:370px;width:31px;top:517.2px;text-align:right;">0.2</div>
<div class="t ax" style="left:370px;width:31px;top:545.0px;text-align:right;">0.0</div>
<div class="t ytitle"><span style="transform-origin:50% 50%;transform:scaleX(1.0109);width:119.02px;text-align-last:justify;display:inline-block"><span style="font-weight:normal">予測確率</span>_Daytime plan</span></div>
<div class="t xl" style="right:775.85px;">AL</div>
<div class="t xl" style="right:750.85px;">AZ</div>
<div class="t xl" style="right:725.85px;">CT</div>
<div class="t xl" style="right:700.85px;">DE</div>
<div class="t xl" style="right:675.85px;">IA</div>
<div class="t xl" style="right:650.85px;">IL</div>
<div class="t xl" style="right:625.85px;">KS</div>
<div class="t xl" style="right:600.85px;">MA</div>
<div class="t xl" style="right:575.85px;">ME</div>
<div class="t xl" style="right:550.85px;">MN</div>
<div class="t xl" style="right:525.85px;">MS</div>
<div class="t xl" style="right:500.85px;">NH</div>
<div class="t xl" style="right:475.85px;">NM</div>
<div class="t xl" style="right:450.85px;">OH</div>
<div class="t xl" style="right:425.85px;">OR</div>
<div class="t xl" style="right:400.85px;">SC</div>
<div class="t xl" style="right:375.85px;">TN</div>
<div class="t xl" style="right:350.85px;">VT</div>
<div class="t xl" style="right:325.85px;">WI</div>
<div class="t xl" style="right:300.85px;">WY</div>
<div class="abs" style="left:0;top:599px;width:1200px;height:26px;background:#e4e4e4;border-top:1px solid #d4d4d4;box-sizing:border-box"></div>
<div class="abs" style="left:123px;top:599px;width:50px;height:26px;background:#f5f5f5"></div>
<svg class="abs" style="left:0;top:599px" width="240" height="26" viewBox="0 599 240 26">
<g stroke="#777" stroke-width=".9" fill="none"><ellipse cx="9.800" cy="611.500" rx="2.200" ry="1"/><path d="M7.600 611.500v5c0 .6 1 1 2.200 1s2.200 -.4 2.200 -1v-5"/></g>
<g fill="#d4d4d4"><rect x="173" y="600" width="1" height="25"/><rect x="193" y="600" width="1" height="25"/><rect x="213" y="600" width="1" height="25"/><rect x="233" y="600" width="1" height="25"/></g>
<g stroke="#777" stroke-width="1" fill="none">
<rect x="179.500" y="609.500" width="7.500" height="6.500"/><path d="M181.500 614v-1.500M183.300 614v-3" stroke="#999"/>
<rect x="199.500" y="609.500" width="7.500" height="6.500"/><path d="M199.500 612.500h7.500M203.200 609.500v6.500" stroke="#888"/>
<path d="M219.500 609.500h3.500v6.500h-3.500zM223 610.500l3.500 -1v6.500l-3.500 1"/>
</g>
<g stroke="#333" stroke-width="1.300" fill="none">
<path d="M186.800 613.500v4.600M184.500 615.800h4.600"/><path d="M206.800 613.500v4.600M204.500 615.800h4.600"/><path d="M226.800 613.500v4.600M224.500 615.800h4.600"/>
</g>
</svg>
<div class="t" style="transform-origin:0 50%;transform:scaleX(0.7472);width:75.36px;text-align-last:justify;left:17.500px;top:605.500px;font-size:12px;line-height:17px;color:#555">データ ソース</div>
<div class="t" style="transform-origin:0 50%;transform:scaleX(0.7080);width:49.46px;text-align-last:justify;left:128.500px;top:605.500px;font-size:12.500px;line-height:17px;color:#555">シート 1</div>

</body>
</html>
